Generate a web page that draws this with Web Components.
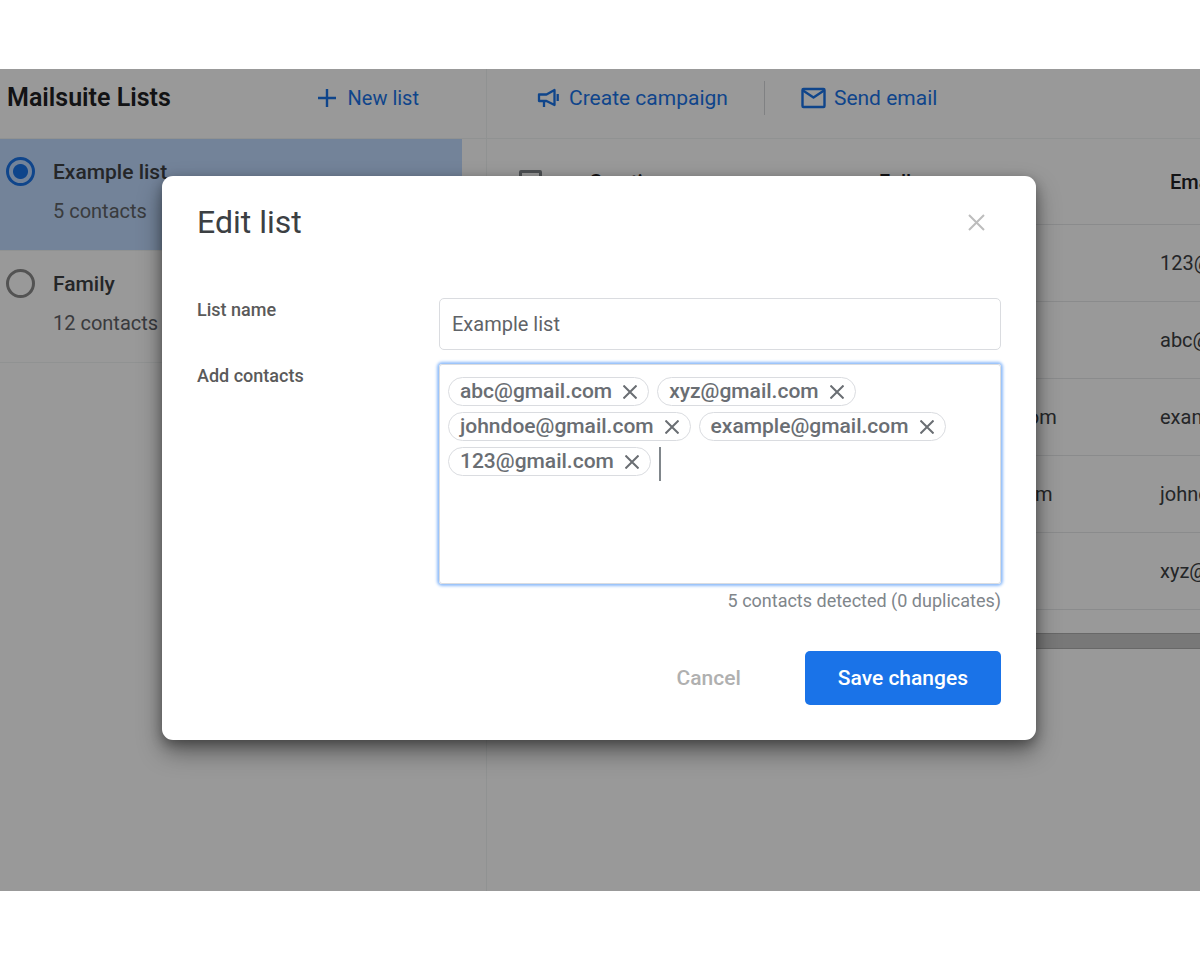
<!DOCTYPE html>
<html lang="en">
<head>
<meta charset="utf-8">
<title>Mailsuite Lists</title>
<style>
  body { margin: 0; background: #fff; color: #202124; font-family: Roboto, "Liberation Sans", sans-serif; font-size: 21px; line-height: 28px; }
</style>
</head>
<body>
<lists-app>
  <list-sidebar slot="sidebar">
    <list-entry checked name="Example list">5 contacts</list-entry>
    <list-entry name="Family">12 contacts</list-entry>
  </list-sidebar>
  <contacts-panel slot="main"></contacts-panel>
  <modal-dialog slot="dialog" heading="Edit list">
    <form-row label="List name" kind="text" value="Example list"></form-row>
    <form-row label="Add contacts" kind="chips" note="5 contacts detected (0 duplicates)">
      <contact-chip>abc@gmail.com</contact-chip>
      <contact-chip>xyz@gmail.com</contact-chip>
      <contact-chip>johndoe@gmail.com</contact-chip>
      <contact-chip>example@gmail.com</contact-chip>
      <contact-chip>123@gmail.com</contact-chip>
    </form-row>
    <action-button slot="actions">Cancel</action-button>
    <action-button slot="actions" primary>Save changes</action-button>
  </modal-dialog>
</lists-app>

<script>
const define = (name, render) => customElements.define(name, class extends HTMLElement {
  constructor() {
    super();
    this.attachShadow({ mode: 'open' });
  }
  connectedCallback() {
    this.shadowRoot.innerHTML = '<style>*{box-sizing:border-box}button,input{font:inherit;color:inherit}</style>' + render(this);
  }
});

define('lists-app', () => `
  <style>
    :host { display: block; padding: 69px 0; }
    .frame { position: relative; display: flex; min-height: calc(100vh - 138px); overflow: hidden; }
    .side { flex: none; width: 487px; border-right: 1px solid #f1f3f4; }
    .main { flex: 1; min-width: 0; }
    .overlay { position: absolute; inset: 0; display: flex; justify-content: center; align-items: flex-start; padding: 107px 26px 24px 24px; box-sizing: border-box; background: rgba(0,0,0,.4); }
  </style>
  <div class="frame">
    <aside class="side"><slot name="sidebar"></slot></aside>
    <main class="main"><slot name="main"></slot></main>
    <div class="overlay"><slot name="dialog"></slot></div>
  </div>`);

define('list-sidebar', () => `
  <style>
    :host { display: block; }
    header { display: flex; align-items: center; justify-content: space-between; height: 70px; padding: 0 67px 12px 7px; border-bottom: 1px solid #f1f3f4; }
    h1 { margin: 0; font-size: 25px; font-weight: 600; line-height: 28px; }
    button { display: flex; align-items: center; gap: 12px; padding: 0; border: 0; background: none; color: #1a73e8; font-size: 20px; }
  </style>
  <header>
    <h1>Mailsuite Lists</h1>
    <button type="button">
      <svg width="18" height="18" viewBox="0 0 18 18" fill="none" stroke="currentColor" stroke-width="2.4" aria-hidden="true"><path d="M9 0v18M0 9h18"/></svg>
      New list
    </button>
  </header>
  <slot></slot>`);

define('list-entry', el => `
  <style>
    :host { display: block; }
    label { display: grid; grid-template-columns: 29px 1fr; column-gap: 18px; row-gap: 11px; align-items: center; padding: 18px 6px 25px; border-bottom: 1px solid #f1f3f4; }
    :host([checked]) label { margin-right: 24px; background: #c0dbff; }
    input { appearance: none; width: 29px; height: 29px; margin: 0; border: 3px solid #8a8a8a; border-radius: 50%; }
    input:checked { border-color: #1a73e8; background: radial-gradient(circle, #1a73e8 7px, transparent 8px); }
    .name { font-weight: 500; color: #3c4043; }
    .count { grid-column: 2; font-size: 20px; color: #5f6368; }
  </style>
  <label>
    <input type="radio" ${el.hasAttribute('checked') ? 'checked' : ''}>
    <span class="name">${el.getAttribute('name')}</span>
    <span class="count"><slot></slot></span>
  </label>`);

define('contacts-panel', () => {
  const mails = ['123@gmail.com', 'abc@gmail.com', 'example@gmail.com', 'johndoe@gmail.com', 'xyz@gmail.com'];
  return `
  <style>
    :host { display: block; overflow: hidden; }
    nav { display: flex; align-items: center; height: 70px; padding: 0 50px 12px; border-bottom: 1px solid #f1f3f4; }
    a { display: flex; align-items: center; gap: 8px; color: #1a73e8; text-decoration: none; }
    .rule { width: 1px; height: 34px; margin: 0 36px; background: #d5d7da; }
    table { width: 920px; table-layout: fixed; border-collapse: separate; border-spacing: 0; }
    th, td { height: 77px; padding: 0; text-align: left; border-bottom: 1px solid #e6e8ea; font-size: 20px; font-weight: 400; color: #3c4043; white-space: nowrap; }
    th { height: 86px; padding-left: 10px; font-weight: 500; color: #202124; }
    .pick { width: 92px; padding-left: 32px; }
    .greet { width: 290px; }
    .full { width: 291px; }
    .pick input { display: block; appearance: none; width: 23px; height: 23px; margin: 0; border: 3px solid #80868b; border-radius: 2px; }
    .scroll { height: 16px; margin-top: 23px; background: #c8c8c8; border: solid #aeaeae; border-width: 1px 0; }
  </style>
  <nav aria-label="List actions">
    <a href="#campaign">
      <svg width="24" height="22" viewBox="0 0 24 22" fill="none" stroke="currentColor" stroke-width="2.3" stroke-linejoin="round" aria-hidden="true"><path d="M2 7.5h7.500L17.500 3v15L9.500 14H2zM7 14v6M20.700 7v7"/></svg>
      Create campaign
    </a>
    <span class="rule"></span>
    <a href="#email">
      <svg width="25" height="22" viewBox="0 0 25 22" fill="none" stroke="currentColor" stroke-width="2.4" stroke-linejoin="round" aria-hidden="true"><rect x="1.500" y="2" width="22" height="18" rx="1"/><path d="M2 3.500l10.500 7l10.500-7"/></svg>
      Send email
    </a>
  </nav>
  <table>
    <thead><tr><th class="pick"><input type="checkbox" aria-label="Select all"></th><th class="greet">Greeting</th><th class="full">Full name</th><th>Email</th></tr></thead>
    <tbody>${mails.map(m => `<tr><td class="pick"><input type="checkbox" aria-label="Select ${m}"></td><td></td><td>${m}</td><td>${m}</td></tr>`).join('')}</tbody>
  </table>
  <div class="scroll"></div>`;
});

define('modal-dialog', el => `
  <style>
    :host { display: block; width: 100%; max-width: 874px; }
    section { padding: 29px 35px 35px; border-radius: 11px; background: #fff; box-shadow: 0 12px 24px rgba(0,0,0,.4), 0 4px 12px rgba(0,0,0,.3); }
    header { display: flex; align-items: center; justify-content: space-between; padding-right: 16px; margin-bottom: 58px; }
    h2 { margin: 0; font-size: 32px; line-height: 35px; font-weight: 400; color: #3c4043; }
    button { display: flex; padding: 0; border: 0; background: none; color: #bdbdbd; }
    .fields { display: flex; flex-direction: column; gap: 14px; }
    footer { display: flex; justify-content: flex-end; align-items: center; gap: 31px; margin-top: 37px; }
  </style>
  <section role="dialog" aria-labelledby="title">
    <header>
      <h2 id="title">${el.getAttribute('heading')}</h2>
      <button type="button" aria-label="Close"><svg width="17" height="17" viewBox="0 0 17 17" fill="none" stroke="currentColor" stroke-width="2"><path d="M1 1l15 15M16 1L1 16"/></svg></button>
    </header>
    <div class="fields"><slot></slot></div>
    <footer><slot name="actions"></slot></footer>
  </section>`);

define('form-row', el => {
  const chips = el.getAttribute('kind') === 'chips';
  const note = el.getAttribute('note');
  return `
  <style>
    :host { display: grid; grid-template-columns: 242px 1fr; color: #5f6368; }
    label { font-size: 18px; line-height: 24px; font-weight: 500; color: #5a5a5a; }
    .text { display: block; width: 100%; height: 52px; padding: 0 12px; border: 1px solid #dadce0; border-radius: 5px; outline: 0; background: #fff; font-size: 20px; }
    .box { display: flex; flex-wrap: wrap; align-items: flex-start; align-content: flex-start; gap: 6px 8px; min-height: 220px; padding: 12px 8px; border: 1px solid #dadce0; border-radius: 3px; box-shadow: 0 0 3px 2px #8ebcfa; }
    .entry { flex: 1; min-width: 40px; height: 34px; padding: 0 4px; border: 0; border-left: 2px solid #80868b; outline: 0; background: none; caret-color: transparent; }
    p { margin: 4px 0 0; font-size: 18px; line-height: 26px; text-align: right; color: #80868b; }
  </style>
  <label for="control">${el.getAttribute('label')}</label>
  <div>
    ${chips
      ? '<div class="box"><slot></slot><input class="entry" id="control" type="text"></div>'
      : `<input class="text" id="control" type="text" value="${el.getAttribute('value')}">`}
    ${note ? `<p>${note}</p>` : ''}
  </div>`;
});

define('contact-chip', () => `
  <style>
    :host { display: flex; align-items: center; gap: 11px; height: 29px; box-sizing: border-box; padding: 0 11px; border: 1px solid #dadce0; border-radius: 15px; font-weight: 500; line-height: 27px; color: #6a6e73; }
    button { display: flex; padding: 0; border: 0; background: none; }
  </style>
  <slot></slot>
  <button type="button" aria-label="Remove"><svg width="14" height="14" viewBox="0 0 14 14" fill="none" stroke="currentColor" stroke-width="2"><path d="M0.500 0.500l13 13M13.500 0.500l-13 13"/></svg></button>`);

define('action-button', el => `
  <style>
    :host { display: block; }
    button { padding: 0 33px; height: 54px; border: 0; border-radius: 5px; background: none; font-weight: 500; color: #b0b0b0; }
    :host([primary]) button { background: #1a73e8; color: #fff; }
  </style>
  <button type="button"><slot></slot></button>`);
</script>
</body>
</html>
